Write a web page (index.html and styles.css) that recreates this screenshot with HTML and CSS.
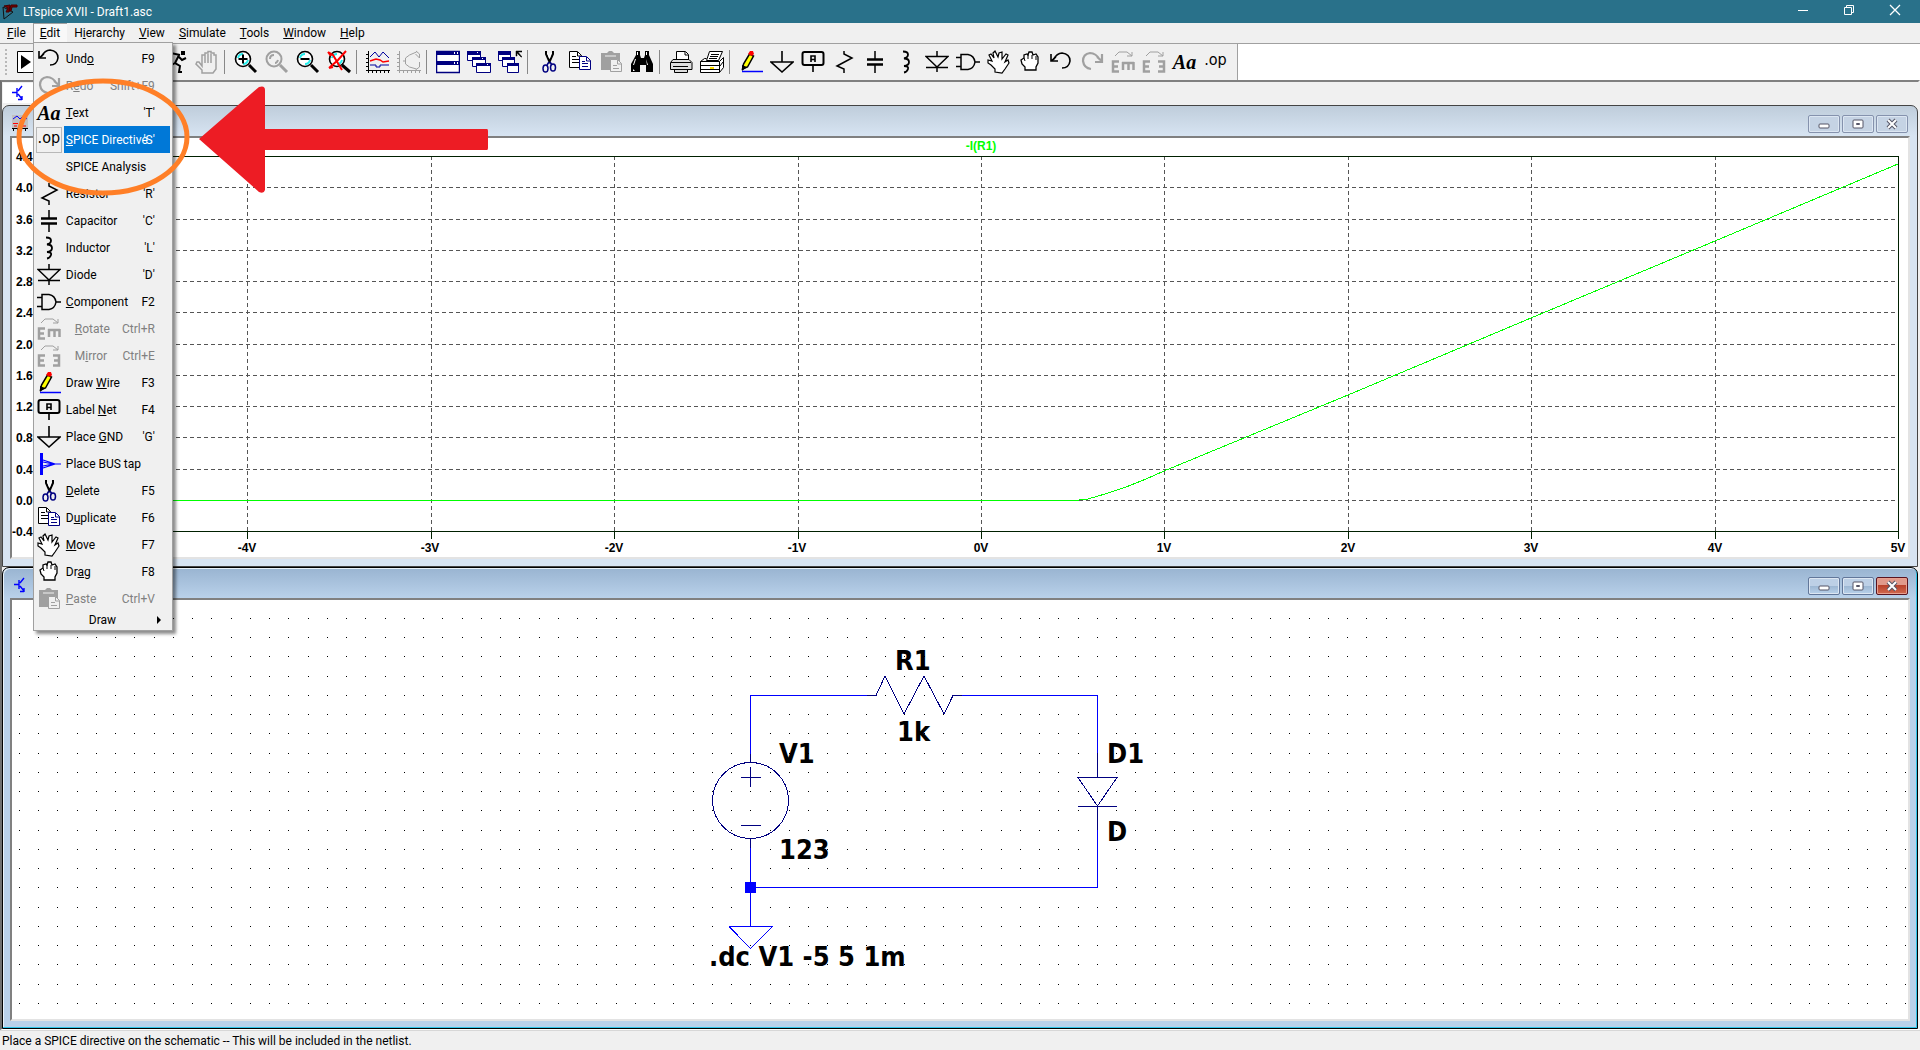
FILE: index.html
```html
<!DOCTYPE html>
<html lang="en">
<head>
    <meta charset="UTF-8">
    <meta name="viewport" content="width=device-width, initial-scale=1.0">
    <title>LTspice XVII - Draft1.asc</title>
    <link rel="stylesheet" href="styles.css">
</head>
<body>
    <!-- icon set -->
    <svg class="defs" aria-hidden="true">
        <symbol id="i-run" viewBox="0 0 24 24"><path d="M1.5 1.5h21v21h-21z" fill="#fff" stroke="#000"/><path d="M5 5v14l10-7z"/></symbol>
        <symbol id="i-open" viewBox="0 0 24 24"><path d="M2 19V6h7l2 2h9v3H7l-5 8zh16l5-8" fill="#ffec8b" stroke="#000"/></symbol>
        <symbol id="i-save" viewBox="0 0 24 24"><path d="M3 3h18v18H3z" fill="#808000" stroke="#000"/><path d="M7 4h10v7H7zM8 15h8v6H8z" fill="#fff"/></symbol>
        <symbol id="i-panel" viewBox="0 0 24 24"><path d="M4 8l6-5 5 5-3 1 9 11-2 2L9 11l-2 1z" stroke="#000"/></symbol>
        <symbol id="i-runner" viewBox="0 0 24 24"><path d="M17 1h4v4h-4z"/><path d="M16 5L7 3 4 7M15 5l-4 8 5 3-1 6h3M11 13l-5 3-5-1M15 7l3 3 4-2" fill="none" stroke="#000" stroke-width="2"/></symbol>
        <symbol id="i-halt" viewBox="0 0 24 24"><path d="M7 23v-3l-6-6 1-2 2 0 3 4V5h3V3h3V1.500h3V3h3v2h2v14l-3 4zM10 5v8M13 4v9M16 4v9" fill="#f0f0f0" stroke="#a0a0a0" stroke-width="1.500"/></symbol>
        <symbol id="i-zoomin" viewBox="0 0 24 24"><circle cx="9" cy="9" r="7.5" fill="#fff" stroke="#000" stroke-width="1.6"/><path d="M4 8q1-4 5-4M14 10q-1 4-5 4" fill="none" stroke="#2ee" stroke-width="2"/><path d="M9 4.500v9M4.500 9h9" stroke="#000" stroke-width="2"/><path d="M15 15l7 7" stroke="#000" stroke-width="3"/></symbol>
        <symbol id="i-zoompan" viewBox="0 0 24 24"><circle cx="9" cy="9" r="7.5" fill="#f0f0f0" stroke="#a0a0a0" stroke-width="2"/><path d="M5 9q0-4 4-4M13 10q-1 3-3 3" fill="none" stroke="#a0a0a0" stroke-width="2"/><path d="M15 15l7 7" stroke="#a0a0a0" stroke-width="3"/></symbol>
        <symbol id="i-zoomout" viewBox="0 0 24 24"><circle cx="9" cy="9" r="7.5" fill="#fff" stroke="#000" stroke-width="1.6"/><path d="M4 8q1-4 5-4M14 10q-1 4-5 4" fill="none" stroke="#2ee" stroke-width="2"/><path d="M4.500 9h9" stroke="#000" stroke-width="2"/><path d="M15 15l7 7" stroke="#000" stroke-width="3"/></symbol>
        <symbol id="i-zoomfit" viewBox="0 0 24 24"><circle cx="10" cy="9" r="7.5" fill="#fff" stroke="#000" stroke-width="1.6"/><path d="M5 8q1-4 5-4M15 10q-1 4-5 4" fill="none" stroke="#2ee" stroke-width="2"/><path d="M15 15l8 7" stroke="#000" stroke-width="3"/><path d="M1 2l5 3 9 15M19 1l-8 9-9 8M1 2l3 4M2 18l4-1" fill="none" stroke="#f00" stroke-width="2"/></symbol>
        <symbol id="i-plot" viewBox="0 0 24 24"><path d="M2.500 1v22M0 20.500h24M0 4.500h2M0 8.500h2M0 12.500h2M0 16.500h2M6.500 20v3M10.500 20v3M14.500 20v3M18.500 20v3M22.500 20v3" stroke="#000"/><path d="M4 7l5-5 4 5 4-5 6 6M4 15h6v2h4v-2h9" fill="none" stroke="#00009c"/><path d="M4 11l3-1 3-1 4 1 3 2 6-1" fill="none" stroke="#f00" stroke-width="1.5"/></symbol>
        <symbol id="i-fft" viewBox="0 0 24 24"><path d="M2.500 1v22M0 20.500h24M0 4.500h2M0 8.500h2M0 12.500h2M0 16.500h2M6.500 20v3M10.500 20v3M14.500 20v3M18.500 20v3M22.500 20v3M6 11h2.500M8.500 14V8l4-3 7-3M8.500 14l4 3 7 2M19 1l3.500 3v4l-4-4M22.500 12v5l-4 3" fill="none" stroke="#a0a0a0"/></symbol>
        <symbol id="i-tile" viewBox="0 0 24 24"><path d="M.5 1.500h23v21H.5z" fill="#fff" stroke="#000080" stroke-width="1.500"/><path d="M0 1h24v4H0zM0 11h24v4H0z" fill="#000080"/><path d="M18 2h1v2h-1zM21 2h1v2h-1zM18 12h1v2h-1zM21 12h1v2h-1z" fill="#fff"/></symbol>
        <symbol id="i-cascade" viewBox="0 0 24 24"><g fill="#fff" stroke="#000080"><path d="M.5 1.500h13v9H.5z"/><path d="M5.500 7.500h13v9h-13z"/><path d="M9.500 13.500h14v9h-14z"/></g><path d="M0 1h14v4H0zM5 7h14v3H5zM9 13h15v3H9z" fill="#000080"/><path d="M10 2h1v1h-1zM15 8h1v1h-1zM20 14h1v1h-1z" fill="#fff"/></symbol>
        <symbol id="i-closeall" viewBox="0 0 24 24"><g fill="#fff" stroke="#000080"><path d="M.5 1.500h12v9H.5z"/><path d="M4.500 7.500h12v9h-12z"/><path d="M9.500 13.500h11v9h-11z"/></g><path d="M0 1h13v4H0zM4 7h13v3H4zM9 13h12v3H9z" fill="#000080"/><path d="M18 1h6v1h-4l4 5h-1l-4-4v3h-1z" stroke="#000" stroke-width=".5"/></symbol>
        <symbol id="i-cut" viewBox="0 0 24 24"><path d="M9 1v3l4 9M16 1v3l-4 9" fill="none" stroke="#000" stroke-width="2"/><path d="M10.500 3l2 5 1.500-5" fill="none" stroke="#fff"/><ellipse cx="8.500" cy="18.500" rx="2.500" ry="3.500" fill="none" stroke="#000080" stroke-width="1.500"/><ellipse cx="16" cy="17.500" rx="2.500" ry="3.500" fill="none" stroke="#000080" stroke-width="1.500"/><path d="M12 12l-2 3M13 12l2 3" stroke="#000080" stroke-width="1.500"/></symbol>
        <symbol id="i-copy" viewBox="0 0 24 24"><path d="M1.500 1.500h8l4 4v12h-12z" fill="#fff" stroke="#000"/><path d="M9.500 2v4h4M4 6.500h4M4 9.500h7M4 12.500h7" fill="none" stroke="#000"/><path d="M11.500 6.500h7l4 4v9h-11z" fill="#fff" stroke="#000080"/><path d="M18.500 7v4h4M14 11.500h3M14 13.500h6M14 16.500h6" fill="none" stroke="#000080"/></symbol>
        <symbol id="i-paste" viewBox="0 0 24 24"><path d="M2 3h6l2-2h3l2 2h6v17H2z" fill="#a0a0a0"/><path d="M6 6h11" stroke="#f0f0f0"/><path d="M11.500 9.500h7l4 4v8h-11z" fill="#f0f0f0" stroke="#a0a0a0"/><path d="M18.500 10v4h4M14 15.500h4M14 18.500h6" fill="none" stroke="#a0a0a0"/></symbol>
        <symbol id="i-find" viewBox="0 0 24 24"><path d="M6 1h4v4l1 3h3l1-3V1h4v4l4 9v8h-7v-7h-6v7H1v-8l5-9z"/><path d="M7 2h1v3H7zM16 2h1v3h-1zM5 9l-2 6h1l2-6zM16 9l2 6h-1zM9 9v5M3 19v2h2" fill="#fff"/></symbol>
        <symbol id="i-print" viewBox="0 0 24 24"><path d="M7.500 9.500v-8h9l3 3v5" fill="#fff" stroke="#000"/><path d="M4 9.500h16l3 3v7H1.500v-7zM5.500 19.500v3h13v-3" fill="#ddd" stroke="#000"/><path d="M16 2v3h3M2 12.500h20M4 16.500h15" fill="none" stroke="#000"/></symbol>
        <symbol id="i-setup" viewBox="0 0 24 24"><path d="M6.500 10.500l3-9h13l-4 9z" fill="#fff" stroke="#000"/><path d="M11 4.500h8M10 6.500h8M9 8.500h8" stroke="#000"/><path d="M.5 11.500l4-3h2M.5 11.500h19v11H.5zM19.500 11.500l4-4v10l-4 5M20 16l3-4M1 15.500h18M1 19.500h18" fill="#fff" stroke="#000"/><path d="M10 17h4v2h-4z" fill="#fd0"/></symbol>
        <symbol id="i-wire" viewBox="0 0 24 24"><path d="M3.500 19l1-5 6-10 4 2-6 11z" fill="#ff0" stroke="#000" stroke-width="1.500"/><path d="M3 15l5 2-5 4z"/><path d="M9 4l2-3h3l1 3-2 2z" fill="#f00"/><path d="M3 21.500h21" stroke="#00f" stroke-width="1.500"/></symbol>
        <symbol id="i-gnd" viewBox="0 0 24 24"><path d="M12 1v11M1 12h22L12 22z" fill="none" stroke="#000" stroke-width="1.600"/></symbol>
        <symbol id="i-label" viewBox="0 0 24 24"><rect x="1.500" y="2" width="21" height="13" rx="2" fill="#f0f0f0" stroke="#000" stroke-width="2"/><path d="M12 15v7M10 12V6h4v6M10 9.500h4" fill="none" stroke="#000" stroke-width="1.600"/></symbol>
        <symbol id="i-res" viewBox="0 0 24 24"><path d="M12 1v3l8 4-15 8 7 3v4" fill="none" stroke="#000" stroke-width="1.500"/></symbol>
        <symbol id="i-cap" viewBox="0 0 24 24"><path d="M12 1v8M12 15v8" stroke="#000" stroke-width="1.500"/><path d="M4 9.500h16M4 14.500h16" stroke="#000" stroke-width="2.500"/></symbol>
        <symbol id="i-ind" viewBox="0 0 24 24"><path d="M9 1.500q5 0 5 3t-4 4q5 0 5 3.500t-5 4q5 0 4 3t-4 3.500" fill="none" stroke="#000" stroke-width="1.800"/></symbol>
        <symbol id="i-diode" viewBox="0 0 24 24"><path d="M12 1v5M1 6.500h22L12 17zM1 17.500h22M12 17v5" fill="none" stroke="#000" stroke-width="1.500"/></symbol>
        <symbol id="i-comp" viewBox="0 0 24 24"><path d="M5 4.500h7q6 1 7 7.500-1 6.500-7 7.500H5zM0 7.500h5M0 16.500h5M19 12h5" fill="none" stroke="#000" stroke-width="1.500"/></symbol>
        <symbol id="i-move" viewBox="0 0 24 24"><path d="M8 22v-3l-4-4-3-2v-3l4 1-3-6 2-1 3 4-1-5 2-2 3 6 1-4 3-1v7l4-5 2 1-3 7 3-2 1 3-4 6-3 4z" fill="#fff" stroke="#000" stroke-width="1.200"/></symbol>
        <symbol id="i-drag" viewBox="0 0 24 24"><path d="M7 20v-3l-3-3-1-4 3-2V5l3-1 1 1 1-3h3l1 3 3-1 2 3v6l-2 4v3z" fill="#fff" stroke="#000" stroke-width="1.300"/><path d="M6 8l1 3M10 5v4M14 5v4M18 6v4" stroke="#000"/></symbol>
        <symbol id="i-undo" viewBox="0 0 24 24"><path d="M4 10q4-7 9-7 8 1 8 8-1 7-8 7" fill="none" stroke="#000" stroke-width="1.600"/><path d="M2 4v7h7M2 11l5-4" fill="none" stroke="#000" stroke-width="1.600"/></symbol>
        <symbol id="i-redo" viewBox="0 0 24 24"><path d="M20 10q-4-7-10-7-7 1-7 8 1 7 8 8M22 4v8h-7M22 11l-5-4" fill="none" stroke="#a0a0a0" stroke-width="2.200"/></symbol>
        <symbol id="i-rotate" viewBox="0 0 24 24"><path d="M4 6l4-4h8l5 4M16 6h5V2" fill="none" stroke="#a0a0a0"/><path d="M8 11.500H2v10h6M2 16.500h5M11 13h12M12 12v8M17.500 12v8M22.500 12v8" fill="none" stroke="#a0a0a0" stroke-width="2.500"/></symbol>
        <symbol id="i-mirror" viewBox="0 0 24 24"><path d="M4 6l4-4h8l5 4M16 6h5V2" fill="none" stroke="#a0a0a0"/><path d="M8 11.500H2v10h6M2 16.500h5M16 11.500h6v10h-6M22 16.500h-5" fill="none" stroke="#a0a0a0" stroke-width="2.500"/></symbol>
        <symbol id="i-bus" viewBox="0 0 24 24"><path d="M4.500 1v22" stroke="#00f" stroke-width="3"/><path d="M6 8l12 4-12 4M6 10l10 2h8M6 14l10-2" fill="none" stroke="#00f" stroke-width="1.200"/></symbol>
        <symbol id="i-bjt" viewBox="0 0 12 16"><path d="M0 7.500h5M5 3v9M6 6l4-5M6 9l4 5M10 11v4M6 14.500h4" fill="none" stroke="#00f" stroke-width="1.400"/></symbol>
    </svg>

    <header class="titlebar">
        <svg class="logo" viewBox="0 0 16 16"><path d="M1 3l1 12 9-7z" fill="#29718a" stroke="#111"/><path d="M2 2l6-1-1 6h2l1-4h5V1H9L7 8H4l2-4z" fill="#700" stroke="#400"/></svg>
        <h1>LTspice XVII - Draft1.asc</h1>
        <button aria-label="Minimize"><svg width="12" height="12"><path d="M1 6.500h10" stroke="#fff"/></svg></button>
        <button aria-label="Restore"><svg width="12" height="12"><path d="M1.500 3.500h7v7h-7zM3.500 3V1.500h7v7H9" fill="none" stroke="#fff"/></svg></button>
        <button aria-label="Close"><svg width="12" height="12"><path d="M1 1l10 10M11 1L1 11" stroke="#fff" stroke-width="1.300"/></svg></button>
    </header>

    <nav class="menubar">
        <button><u>F</u>ile</button>
        <div class="menu-wrap">
            <button class="open" aria-expanded="true"><u>E</u>dit</button>
            <ul class="menu">
                <li><button><svg class="icon"><use href="#i-undo"/></svg><span>Und<u>o</u></span><kbd>F9</kbd></button></li>
                <li><button disabled><svg class="icon"><use href="#i-redo"/></svg><span>R<u>e</u>do</span><kbd>Shift+F9</kbd></button></li>
                <li><button><b class="icon glyph-text">Aa</b><span><u>T</u>ext</span><kbd>'T'</kbd></button></li>
                <li><button class="selected"><b class="icon glyph-op">.op</b><span><u>S</u>PICE Directive</span><kbd>'S'</kbd></button></li>
                <li><button><i class="icon"></i><span>SPICE Analysis</span></button></li>
                <li><button><svg class="icon"><use href="#i-res"/></svg><span>Resistor</span><kbd>'R'</kbd></button></li>
                <li><button><svg class="icon"><use href="#i-cap"/></svg><span>Capacitor</span><kbd>'C'</kbd></button></li>
                <li><button><svg class="icon"><use href="#i-ind"/></svg><span>Inductor</span><kbd>'L'</kbd></button></li>
                <li><button><svg class="icon"><use href="#i-diode"/></svg><span>Diode</span><kbd>'D'</kbd></button></li>
                <li><button><svg class="icon"><use href="#i-comp"/></svg><span><u>C</u>omponent</span><kbd>F2</kbd></button></li>
                <li><button disabled class="indent"><svg class="icon"><use href="#i-rotate"/></svg><span><u>R</u>otate</span><kbd>Ctrl+R</kbd></button></li>
                <li><button disabled class="indent"><svg class="icon"><use href="#i-mirror"/></svg><span>M<u>i</u>rror</span><kbd>Ctrl+E</kbd></button></li>
                <li><button><svg class="icon"><use href="#i-wire"/></svg><span>Draw <u>W</u>ire</span><kbd>F3</kbd></button></li>
                <li><button><svg class="icon"><use href="#i-label"/></svg><span>Label <u>N</u>et</span><kbd>F4</kbd></button></li>
                <li><button><svg class="icon"><use href="#i-gnd"/></svg><span>Place <u>G</u>ND</span><kbd>'G'</kbd></button></li>
                <li><button><svg class="icon"><use href="#i-bus"/></svg><span>Place BUS tap</span></button></li>
                <li><button><svg class="icon"><use href="#i-cut"/></svg><span><u>D</u>elete</span><kbd>F5</kbd></button></li>
                <li><button><svg class="icon"><use href="#i-copy"/></svg><span>D<u>u</u>plicate</span><kbd>F6</kbd></button></li>
                <li><button><svg class="icon"><use href="#i-move"/></svg><span><u>M</u>ove</span><kbd>F7</kbd></button></li>
                <li><button><svg class="icon"><use href="#i-drag"/></svg><span>Dr<u>a</u>g</span><kbd>F8</kbd></button></li>
                <li><button disabled><svg class="icon"><use href="#i-paste"/></svg><span><u>P</u>aste</span><kbd>Ctrl+V</kbd></button></li>
                <li><button class="submenu"><span>Draw</span><svg width="5" height="8"><path d="M0 0l4 4-4 4z"/></svg></button></li>
            </ul>
        </div>
        <button>H<u>i</u>erarchy</button>
        <button><u>V</u>iew</button>
        <button><u>S</u>imulate</button>
        <button><u>T</u>ools</button>
        <button><u>W</u>indow</button>
        <button><u>H</u>elp</button>
    </nav>

    <div class="toolbar-row">
        <div class="toolbar">
            <button aria-label="Run"><svg class="icon"><use href="#i-run"/></svg></button>
            <i class="sep"></i>
            <button aria-label="Open"><svg class="icon"><use href="#i-open"/></svg></button>
            <i class="sep"></i>
            <button aria-label="Save"><svg class="icon"><use href="#i-save"/></svg></button>
            <i class="sep"></i>
            <button aria-label="Control Panel"><svg class="icon"><use href="#i-panel"/></svg></button>
            <button aria-label="Run simulation"><svg class="icon"><use href="#i-runner"/></svg></button>
            <button disabled aria-label="Halt"><svg class="icon"><use href="#i-halt"/></svg></button>
            <i class="sep"></i>
            <button aria-label="Zoom in"><svg class="icon"><use href="#i-zoomin"/></svg></button>
            <button disabled aria-label="Pan"><svg class="icon"><use href="#i-zoompan"/></svg></button>
            <button aria-label="Zoom out"><svg class="icon"><use href="#i-zoomout"/></svg></button>
            <button aria-label="Zoom to fit"><svg class="icon"><use href="#i-zoomfit"/></svg></button>
            <i class="sep"></i>
            <button aria-label="Autorange"><svg class="icon"><use href="#i-plot"/></svg></button>
            <button disabled aria-label="FFT"><svg class="icon"><use href="#i-fft"/></svg></button>
            <i class="sep"></i>
            <button aria-label="Tile"><svg class="icon"><use href="#i-tile"/></svg></button>
            <button aria-label="Cascade"><svg class="icon"><use href="#i-cascade"/></svg></button>
            <button aria-label="Close all"><svg class="icon"><use href="#i-closeall"/></svg></button>
            <i class="sep"></i>
            <button aria-label="Cut"><svg class="icon"><use href="#i-cut"/></svg></button>
            <button aria-label="Copy"><svg class="icon"><use href="#i-copy"/></svg></button>
            <button disabled aria-label="Paste"><svg class="icon"><use href="#i-paste"/></svg></button>
            <button aria-label="Find"><svg class="icon"><use href="#i-find"/></svg></button>
            <i class="sep"></i>
            <button aria-label="Print"><svg class="icon"><use href="#i-print"/></svg></button>
            <button aria-label="Print setup"><svg class="icon"><use href="#i-setup"/></svg></button>
            <i class="sep"></i>
            <button aria-label="Wire"><svg class="icon"><use href="#i-wire"/></svg></button>
            <button aria-label="Ground"><svg class="icon"><use href="#i-gnd"/></svg></button>
            <button aria-label="Label net"><svg class="icon"><use href="#i-label"/></svg></button>
            <button aria-label="Resistor"><svg class="icon"><use href="#i-res"/></svg></button>
            <button aria-label="Capacitor"><svg class="icon"><use href="#i-cap"/></svg></button>
            <button aria-label="Inductor"><svg class="icon"><use href="#i-ind"/></svg></button>
            <button aria-label="Diode"><svg class="icon"><use href="#i-diode"/></svg></button>
            <button aria-label="Component"><svg class="icon"><use href="#i-comp"/></svg></button>
            <button aria-label="Move"><svg class="icon"><use href="#i-move"/></svg></button>
            <button aria-label="Drag"><svg class="icon"><use href="#i-drag"/></svg></button>
            <button aria-label="Undo"><svg class="icon"><use href="#i-undo"/></svg></button>
            <button disabled aria-label="Redo"><svg class="icon"><use href="#i-redo"/></svg></button>
            <button disabled aria-label="Rotate"><svg class="icon"><use href="#i-rotate"/></svg></button>
            <button disabled aria-label="Mirror"><svg class="icon"><use href="#i-mirror"/></svg></button>
            <button aria-label="Text"><b class="icon glyph-text">Aa</b></button>
            <button aria-label="SPICE directive"><b class="icon glyph-op">.op</b></button>
        </div>
    </div>

    <main class="workspace">
        <div class="tabs">
            <button class="tab" aria-label="Draft1.asc"><svg width="12" height="16"><use href="#i-bjt"/></svg></button>
        </div>

        <section class="window">
            <div class="window-title">
                <svg class="window-icon" viewBox="0 0 16 16"><path d="M0 0h16v14H0z" fill="#c0c0c0"/><path d="M1 4l4-3 3 3 3-3 4 3" fill="none" stroke="#00f"/><path d="M1 8.500h5M8 8.500h4M2 11h3M9 11h5" stroke="#f00"/><path d="M0 13.500h16M1.500 13v3M5.500 13v3M9.500 13v3M13.500 13v3" stroke="#000"/></svg>
                <button aria-label="Minimize"><svg width="16" height="12"><rect x="3" y="6" width="10" height="4" rx="1" fill="#fff" stroke="#556"/></svg></button>
                <button aria-label="Maximize"><svg width="16" height="12"><rect x="3" y="2" width="10" height="8" rx="1" fill="#fff" stroke="#556"/><path d="M6.500 5.500h3v1h-3z" fill="none" stroke="#556"/></svg></button>
                <button aria-label="Close"><svg width="16" height="12"><path d="M4 2l8 8M12 2l-8 8" stroke="#556" stroke-width="4"/><path d="M4 2l8 8M12 2l-8 8" stroke="#fff" stroke-width="2"/></svg></button>
            </div>
            <div class="client">
                <svg class="plot" viewBox="0 0 1896 419">
                    <g fill="none" shape-rendering="crispEdges">
                        <path class="gridline" d="M52 49.500h1834M52 81.500h1834M52 112.500h1834M52 143.500h1834M52 174.500h1834M52 206.500h1834M52 237.500h1834M52 268.500h1834M52 299.500h1834M52 331.500h1834M52 362.500h1834"/>
                        <path class="gridline" d="M235.500 18v375M419.500 18v375M602.500 18v375M786.500 18v375M969.500 18v375M1152.500 18v375M1336.500 18v375M1519.500 18v375M1703.500 18v375"/>
                        <path stroke="#002000" d="M52.500 18.500h1834v375h-1834zM52.500 393v8M235.500 393v8M419.500 393v8M602.500 393v8M786.500 393v8M969.500 393v8M1152.500 393v8M1336.500 393v8M1519.500 393v8M1703.500 393v8M1886.500 393v8"/>
                        <path class="trace" d="M52 362.500H1062L1076 361 1093 356 1114 349 1134 341 1152 333 1336 257 1519 180 1703 103 1886 26"/>
                    </g>
                    <text class="trace-name" x="969" y="12" text-anchor="middle">-I(R1)</text>
                    <g class="axis">
                        <text x="4" y="23">4.4mA</text>
                        <text x="4" y="54">4.0mA</text>
                        <text x="4" y="86">3.6mA</text>
                        <text x="4" y="117">3.2mA</text>
                        <text x="4" y="148">2.8mA</text>
                        <text x="4" y="179">2.4mA</text>
                        <text x="4" y="211">2.0mA</text>
                        <text x="4" y="242">1.6mA</text>
                        <text x="4" y="273">1.2mA</text>
                        <text x="4" y="304">0.8mA</text>
                        <text x="4" y="336">0.4mA</text>
                        <text x="4" y="367">0.0mA</text>
                        <text x="0" y="398">-0.4mA</text>
                    </g>
                    <g class="axis" text-anchor="middle">
                        <text x="52" y="414">-5V</text>
                        <text x="235" y="414">-4V</text>
                        <text x="418" y="414">-3V</text>
                        <text x="602" y="414">-2V</text>
                        <text x="785" y="414">-1V</text>
                        <text x="969" y="414">0V</text>
                        <text x="1152" y="414">1V</text>
                        <text x="1336" y="414">2V</text>
                        <text x="1519" y="414">3V</text>
                        <text x="1703" y="414">4V</text>
                        <text x="1886" y="414">5V</text>
                    </g>
                </svg>
            </div>
        </section>

        <section class="window active">
            <div class="window-title">
                <svg class="window-icon" viewBox="0 0 12 16"><use href="#i-bjt"/></svg>
                <button aria-label="Minimize"><svg width="16" height="12"><rect x="3" y="6" width="10" height="4" rx="1" fill="#fff" stroke="#556"/></svg></button>
                <button aria-label="Maximize"><svg width="16" height="12"><rect x="3" y="2" width="10" height="8" rx="1" fill="#fff" stroke="#556"/><path d="M6.500 5.500h3v1h-3z" fill="none" stroke="#556"/></svg></button>
                <button class="close" aria-label="Close"><svg width="16" height="12"><path d="M4 2l8 8M12 2l-8 8" stroke="#556" stroke-width="4"/><path d="M4 2l8 8M12 2l-8 8" stroke="#fff" stroke-width="2"/></svg></button>
            </div>
            <div class="client">
                <svg class="schematic">
                    <defs>
                        <pattern id="dots" x="7" y="-1" width="77" height="77" patternUnits="userSpaceOnUse">
                            <path stroke="#000" stroke-dasharray="1 18 1 18 1 19 1 18" d="M0 .5h77M0 19.500h77M0 38.500h77M0 57.500h77"/>
                        </pattern>
                    </defs>
                    <rect width="100%" height="100%" fill="url(#dots)"/>
                    <g fill="none" stroke="#00f" shape-rendering="crispEdges">
                        <path d="M738.500 154V95.500H855M950 95.500H1085.500V153M1085.500 230V287.500H738.500V248M738.500 287V326"/>
                        <path d="M717 326.500H760.500L738.500 348.500 717 326.500"/>
                        <path fill="#00f" d="M733.500 282.500h10v10h-10z"/>
                    </g>
                    <g fill="none" stroke="#000080" shape-rendering="crispEdges">
                        <path d="M855 95.500H864L873 76 892 114 912 76 932 114 941 95.500H950"/>
                        <circle cx="738.500" cy="200.500" r="38"/>
                        <path d="M738.500 154v8M738.500 239v9M729 177.500h20M738.500 167v20M729 225.500h20"/>
                        <path d="M1085.500 153v24M1066 177.500h39L1085.500 206zM1066 206.500h39M1085.500 206v24"/>
                    </g>
                    <g class="part">
                        <text x="883" y="70">R1</text>
                        <text x="885" y="141">1k</text>
                        <text x="767" y="163">V1</text>
                        <text x="767" y="259">123</text>
                        <text x="1095" y="163">D1</text>
                        <text x="1095" y="241">D</text>
                        <text x="697" y="366">.dc V1 -5 5 1m</text>
                    </g>
                </svg>
            </div>
        </section>
    </main>

    <footer class="statusbar">Place a SPICE directive on the schematic -- This will be included in the netlist.</footer>

    <svg class="callout" width="500" height="210" aria-hidden="true">
        <ellipse cx="103" cy="137" rx="84" ry="56" fill="none" stroke="#ff7f27" stroke-width="5"/>
        <path d="M199 139L259 87q6-2 6 3v39h222q1 0 1 2v17q0 2-1 2H265v40q-1 4-6 2z" fill="#ed1c24"/>
    </svg>
</body>
</html>
```

FILE: styles.css
```css
* {
    box-sizing: border-box;
}
body {
    margin: 0;
    min-height: 100vh;
    display: flex;
    flex-direction: column;
    font: 12px/16px "Segoe UI", Roboto, sans-serif;
    background-color: #f0f0f0;
    color: #000;
}
button {
    font: inherit;
    color: inherit;
    background: none;
    border: none;
    padding: 0;
}
.defs {
    display: none;
}
.callout {
    position: absolute;
    top: 0;
    left: 0;
    z-index: 20;
    pointer-events: none;
}
.icon {
    width: 24px;
    height: 24px;
    flex: none;
    display: block;
    text-align: center;
}
.glyph-text {
    font: italic bold 20px/24px "Liberation Serif", serif;
}
.glyph-op {
    font: 16px/20px "DejaVu Sans Condensed", "DejaVu Sans", sans-serif;
}

/* title bar */
.titlebar {
    height: 23px;
    display: flex;
    align-items: center;
    padding: 0 2px;
    background-color: #29718a;
    color: #fff;
}
.titlebar h1 {
    flex: 1;
    margin: 0 0 0 5px;
    font-size: 12px;
    font-weight: normal;
}
.titlebar button {
    width: 46px;
    height: 20px;
}
.logo {
    width: 16px;
    height: 16px;
}

/* menus */
.menubar {
    height: 21px;
    display: flex;
    border-bottom: 1px solid #a0a0a0;
}
.menubar > button, .menu-wrap > button {
    height: 19px;
    padding: 0 7px;
}
.menu-wrap {
    position: relative;
}
.menu-wrap > .open {
    background-color: #f8f8f8;
    box-shadow: inset 1px 1px #a0a0a0;
}
.menu {
    position: absolute;
    top: 19px;
    left: 0;
    z-index: 10;
    width: 140px;
    margin: 0;
    padding: 2px;
    list-style: none;
    background-color: #f0f0f0;
    border: 1px solid #a0a0a0;
    box-shadow: 3px 3px 3px rgba(0, 0, 0, 0.45);
}
.menu button {
    width: 100%;
    height: 27px;
    display: flex;
    align-items: center;
    padding-right: 15px;
    text-align: left;
    white-space: nowrap;
}
.menu .icon {
    margin: 0 4px 0 1px;
}
.menu span {
    flex: 1;
    min-width: 0;
    padding-left: 1px;
}
.menu .indent span {
    padding-left: 10px;
}
.menu kbd {
    font: inherit;
}
.menu button:disabled {
    color: #808080;
}
.menu .selected {
    color: #fff;
    background: linear-gradient(to right, #f0f0f0 28px, #0078d7 28px);
}
.menu .selected .icon {
    color: #000;
    outline: 1px solid #b8b8b8;
}
.menu .submenu {
    height: 16px;
    padding: 0 8px 0 52px;
}

/* toolbar */
.toolbar-row {
    height: 36px;
    background-color: #fff;
    display: flex;
}
.toolbar {
    display: flex;
    align-items: center;
    padding: 0 6px 0 13px;
    background-color: #f0f0f0;
    border-right: 1px solid #a0a0a0;
}
.toolbar::before {
    content: "";
    height: 26px;
    margin: 0 5px 0 -8px;
    border-left: 2px dotted #b8b8b8;
}
.toolbar button {
    width: 31px;
    display: flex;
    justify-content: center;
}
.sep {
    width: 8px;
    height: 24px;
    background: linear-gradient(#888, #888) 2px 0 / 1px 100% no-repeat;
}

/* document windows */
.workspace {
    flex: 1;
    display: flex;
    flex-direction: column;
    border: 2px solid;
    border-color: #808080 #f0f0f0 #fff #707070;
    border-bottom-width: 1px;
}
.tabs {
    height: 23px;
    padding: 1px 0 2px 1px;
}
.tab {
    width: 30px;
    height: 20px;
    padding-left: 9px;
    background-color: #fff;
}
.tab svg {
    display: block;
}
.window {
    flex: 1 1 0;
    display: flex;
    flex-direction: column;
    padding: 0 7px 7px;
    background: #d7e4f2 linear-gradient(#bfcddb, #d7e4f2) 0 0 / 100% 30px no-repeat;
    border: 1px solid #444;
    border-radius: 7px 7px 0 0;
}
.window.active {
    background: #b9d1ea linear-gradient(#99b4d1, #b9d1ea) 0 0 / 100% 30px no-repeat;
    border-color: #000;
    box-shadow: inset -1px -1px #2fc4e8, inset 1px 1px #e8f2fa;
}
.window-title {
    height: 30px;
    display: flex;
    align-items: flex-end;
    gap: 2px;
    padding: 0 2px 3px;
}
.window-icon {
    width: 16px;
    height: 16px;
    margin: 0 auto 2px 0;
}
.window-title button {
    width: 32px;
    height: 18px;
    display: flex;
    align-items: center;
    justify-content: center;
    border: 1px solid #8592ad;
    border-radius: 2px;
    box-shadow: inset 0 0 0 1px #dce6f2;
    background-color: #c5d3e4;
}
.active .window-title button {
    border-color: #62779a;
    background: linear-gradient(#bdd0e6 50%, #9db7d3 50%, #b9d1ea);
}
.active .window-title .close {
    border-color: #5a1420;
    box-shadow: inset 0 0 0 1px #e8a090;
    background: linear-gradient(#e09a8c 45%, #b8402a 45%, #d06a50);
}
.client {
    flex: 1;
    display: flex;
    min-height: 0;
    background-color: #fff;
    border: 2px solid;
    border-color: #808080 #e3e3e3 #e3e3e3 #808080;
}
.plot, .schematic {
    width: 100%;
    height: 100%;
    min-height: 0;
}
.gridline {
    stroke: #555;
    stroke-dasharray: 4 3;
}
.trace {
    stroke: #00ff00;
}
.axis, .trace-name {
    font: bold 12px "Liberation Sans", Arial, sans-serif;
}
.trace-name {
    fill: #00ff00;
}
.part {
    font: bold 27px "DejaVu Sans Condensed", "DejaVu Sans", sans-serif;
}

.statusbar {
    height: 20px;
    padding: 2px 2px 0;
    border-top: 1px solid #d7d7d7;
}
```
